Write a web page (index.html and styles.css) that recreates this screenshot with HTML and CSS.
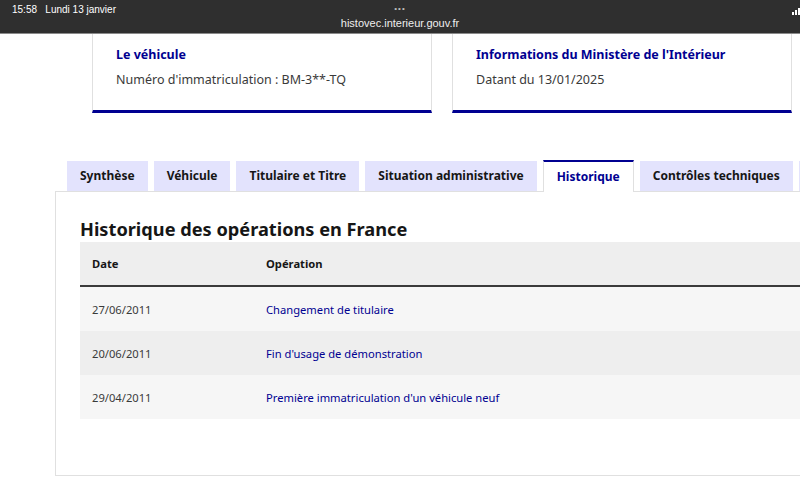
FILE: index.html
```html
<!DOCTYPE html>
<html>
<head>
    <title>HistoVec - Historique</title>
    <link rel="stylesheet" href="styles.css">
</head>
<body>
    <!-- Safari top bar -->
    <div class="statusbar">
        <span class="clock">15:58&nbsp;&nbsp;&nbsp;Lundi 13 janvier</span>
        <div class="address">
            <span class="dots">&bull;&bull;&bull;</span>
            <span class="url">histovec.interieur.gouv.fr</span>
        </div>
        <svg class="signal" width="10" height="8" viewBox="0 0 10 8">
            <rect x="0" y="5" width="2" height="3" fill="#fff"/>
            <rect x="3" y="3" width="2" height="5" fill="#fff"/>
            <rect x="6" y="1" width="2" height="7" fill="#fff"/>
        </svg>
    </div>

    <div class="cards">
        <div class="card">
            <p class="card-title">Le véhicule</p>
            <p class="card-text">Numéro d'immatriculation : BM-3**-TQ</p>
        </div>
        <div class="card">
            <p class="card-title">Informations du Ministère de l'Intérieur</p>
            <p class="card-text">Datant du 13/01/2025</p>
        </div>
    </div>

    <ul class="tabs">
        <li class="tab">Synthèse</li>
        <li class="tab">Véhicule</li>
        <li class="tab">Titulaire et Titre</li>
        <li class="tab">Situation administrative</li>
        <li class="tab active">Historique</li>
        <li class="tab">Contrôles techniques</li>
        <li class="tab tab-more"></li>
    </ul>

    <div class="panel">
        <h2>Historique des opérations en France</h2>
        <table class="history">
            <thead>
                <tr><th class="col-date">Date</th><th>Opération</th></tr>
            </thead>
            <tbody>
                <tr><td>27/06/2011</td><td><a href="#">Changement de titulaire</a></td></tr>
                <tr><td>20/06/2011</td><td><a href="#">Fin d'usage de démonstration</a></td></tr>
                <tr><td>29/04/2011</td><td><a href="#">Première immatriculation d'un véhicule neuf</a></td></tr>
            </tbody>
        </table>
    </div>
</body>
</html>
```

FILE: styles.css
```css
html, body { margin: 0; padding: 0; overflow: hidden; }
body { background-color: white; color: #3a3a3a; font-family: "Noto Sans", Arial, sans-serif; width: 800px; height: 493px; }
p { margin: 0; }

.statusbar {
    position: relative;
    height: 34px;
    background-color: #2f2f2f;
    border-bottom: 1px solid #8a8a8a;
    color: white;
    font-family: "Liberation Sans", Arial, sans-serif;
    box-sizing: border-box;
}
.clock { position: absolute; left: 12px; top: 4px; font-size: 10px; }
.address { display: flex; flex-direction: column; align-items: center; padding-top: 3px; }
.dots { font-size: 8px; color: #bbb; letter-spacing: 1px; line-height: 12px; }
.url { font-size: 11px; color: #eee; line-height: 14px; margin-top: 1px; }
.signal { position: absolute; right: -2px; top: 7px; }

.cards { display: flex; gap: 20px; padding-left: 92px; width: 1000px; }
.card {
    flex-shrink: 0;
    box-sizing: border-box;
    width: 340px;
    height: 79px;
    border-left: 1px solid #e0e0e0;
    border-right: 1px solid #e0e0e0;
    border-bottom: 3px solid #000091;
    padding: 13px 0 0 23px;
}
.card-title { color: #000091; font-weight: bold; font-size: 12.5px; line-height: 16px; }
.card-text { font-size: 12.5px; line-height: 16px; margin-top: 9px; }

.tabs {
    display: flex;
    gap: 6px;
    list-style: none;
    margin: 47px 0 0 0;
    padding: 0 0 0 67px;
    align-items: flex-end;
    width: 1200px;
}
.tab {
    flex-shrink: 0;
    background-color: #e3e3fd;
    color: #161616;
    font-weight: bold;
    font-size: 12px;
    height: 30px;
    line-height: 30px;
    padding: 0 13px;
}
.tab.active {
    position: relative;
    background-color: white;
    color: #000091;
    border-top: 2px solid #000091;
    border-left: 1px solid #e0e0e0;
    border-right: 1px solid #e0e0e0;
    padding: 0 13px;
    margin-bottom: -1px;
}
.tab-more { width: 60px; }

.panel {
    margin-left: 55px;
    width: 900px;
    height: 285px;
    border: 1px solid #e0e0e0;
    box-sizing: border-box;
    padding: 24px 0 0 24px;
}
.panel h2 { margin: 0; font-size: 18.2px; line-height: 26px; color: #161616; font-weight: bold; }

.history { border-collapse: collapse; width: 760px; font-size: 11.2px; }
.history th {
    text-align: left;
    background-color: #eeeeee;
    color: #161616;
    font-weight: bold;
    height: 43px;
    padding: 0 12px;
    border-bottom: 2px solid #3a3a3a;
}
.history .col-date { width: 150px; }
.history td { height: 44px; padding: 0 12px; color: #3a3a3a; }
.history tbody tr:nth-child(odd) { background-color: #f6f6f6; }
.history tbody tr:nth-child(even) { background-color: #eeeeee; }
.history a { color: #000091; text-decoration: none; }
```
